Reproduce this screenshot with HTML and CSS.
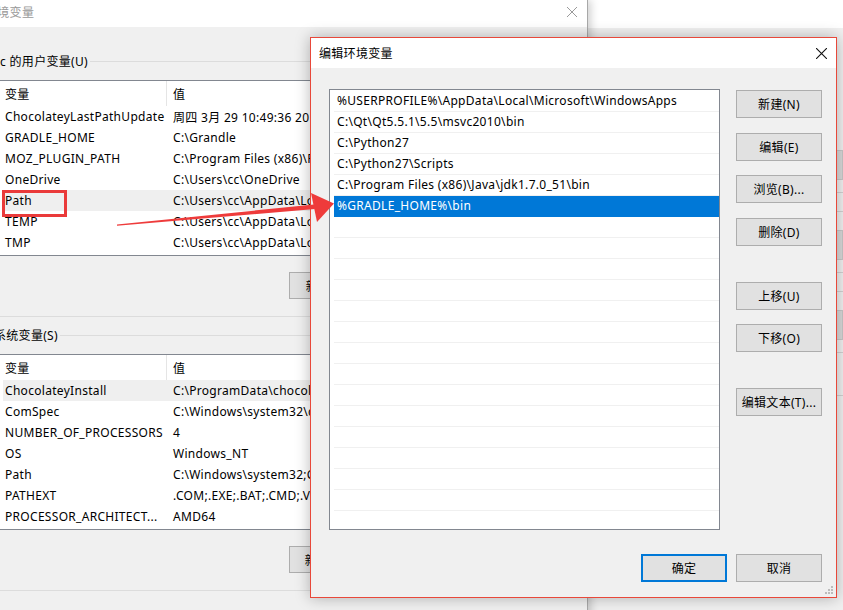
FILE: index.html
```html
<!DOCTYPE html>
<html lang="zh-CN">
<head>
    <meta charset="UTF-8">
    <title>编辑环境变量</title>
    <link rel="stylesheet" href="styles.css">
</head>
<body>
    <!-- window behind everything: system properties -->
    <div class="win sysprops">
        <div class="sp-title"></div>
        <div class="sp-body">
            <div class="sp-band"></div>
            <div class="sp-line"></div>
            <div class="sp-line"></div>
            <div class="sp-band"></div>
            <div class="sp-line"></div>
            <div class="sp-line"></div>
            <div class="sp-band"></div>
            <div class="sp-line"></div>
            <div class="sp-text">变</div>
            <div class="sp-line"></div>
        </div>
    </div>

    <!-- 环境变量 -->
    <div class="win envvars">
        <div class="titlebar">
            <span class="title">环境变量</span>
            <svg class="close" width="10" height="10" viewBox="0 0 10 10"><path d="M0 0L10 10M10 0L0 10" stroke="#9a9a9a" stroke-width="1"/></svg>
        </div>
        <div class="env-body">
            <div class="group-label"><span>cc 的用户变量(U)</span></div>
            <div class="listview">
                <div class="lv-head"><span class="c1">变量</span><span class="c2">值</span></div>
                <div class="lv-row"><span class="c1">ChocolateyLastPathUpdate</span><span class="c2">周四 3月 29 10:49:36 2018</span></div>
                <div class="lv-row"><span class="c1">GRADLE_HOME</span><span class="c2">C:\Grandle</span></div>
                <div class="lv-row"><span class="c1">MOZ_PLUGIN_PATH</span><span class="c2">C:\Program Files (x86)\Foxit Software\plugins</span></div>
                <div class="lv-row"><span class="c1">OneDrive</span><span class="c2">C:\Users\cc\OneDrive</span></div>
                <div class="lv-row hot"><span class="c1">Path</span><span class="c2">C:\Users\cc\AppData\Local\Microsoft\WindowsApps;</span></div>
                <div class="lv-row"><span class="c1">TEMP</span><span class="c2">C:\Users\cc\AppData\Local\Temp</span></div>
                <div class="lv-row"><span class="c1">TMP</span><span class="c2">C:\Users\cc\AppData\Local\Temp</span></div>
            </div>
            <div class="btn-row">
                <button class="btn">新建(N)...</button>
                <button class="btn">编辑(E)...</button>
                <button class="btn">删除(D)</button>
            </div>
            <div class="sep"></div>

            <div class="group-label sys"><span>系统变量(S)</span></div>
            <div class="listview">
                <div class="lv-head"><span class="c1">变量</span><span class="c2">值</span></div>
                <div class="lv-row hot"><span class="c1">ChocolateyInstall</span><span class="c2">C:\ProgramData\chocolatey</span></div>
                <div class="lv-row"><span class="c1">ComSpec</span><span class="c2">C:\Windows\system32\cmd.exe</span></div>
                <div class="lv-row"><span class="c1">NUMBER_OF_PROCESSORS</span><span class="c2">4</span></div>
                <div class="lv-row"><span class="c1">OS</span><span class="c2">Windows_NT</span></div>
                <div class="lv-row"><span class="c1">Path</span><span class="c2">C:\Windows\system32;C:\Windows;C:\Windows\System32\Wbem</span></div>
                <div class="lv-row"><span class="c1">PATHEXT</span><span class="c2">.COM;.EXE;.BAT;.CMD;.VBS;.VBE;.JS</span></div>
                <div class="lv-row"><span class="c1">PROCESSOR_ARCHITECT...</span><span class="c2">AMD64</span></div>
            </div>
            <div class="btn-row">
                <button class="btn">新建(W)...</button>
                <button class="btn">编辑(I)...</button>
                <button class="btn">删除(L)</button>
            </div>
            <div class="sep"></div>
        </div>
    </div>

    <!-- red mark around Path -->
    <div class="mark-box"></div>

    <!-- 编辑环境变量 -->
    <div class="win editdlg">
        <div class="titlebar">
            <span class="title">编辑环境变量</span>
            <svg class="close" width="11" height="11" viewBox="0 0 11 11"><path d="M0 0L11 11M11 0L0 11" stroke="#111" stroke-width="1.1"/></svg>
        </div>
        <div class="dlg-body">
            <div class="dlg-main">
                <div class="pathlist">
                    <div class="pl-row">%USERPROFILE%\AppData\Local\Microsoft\WindowsApps</div>
                    <div class="pl-row">C:\Qt\Qt5.5.1\5.5\msvc2010\bin</div>
                    <div class="pl-row">C:\Python27</div>
                    <div class="pl-row">C:\Python27\Scripts</div>
                    <div class="pl-row">C:\Program Files (x86)\Java\jdk1.7.0_51\bin</div>
                    <div class="pl-row selected">%GRADLE_HOME%\bin</div>
                    <div class="pl-row"></div>
                    <div class="pl-row"></div>
                    <div class="pl-row"></div>
                    <div class="pl-row"></div>
                    <div class="pl-row"></div>
                    <div class="pl-row"></div>
                    <div class="pl-row"></div>
                    <div class="pl-row"></div>
                    <div class="pl-row"></div>
                    <div class="pl-row"></div>
                    <div class="pl-row"></div>
                    <div class="pl-row"></div>
                    <div class="pl-row"></div>
                    <div class="pl-row"></div>
                    <div class="pl-row"></div>
                </div>
                <div class="side-btns">
                    <button class="btn">新建(N)</button>
                    <button class="btn">编辑(E)</button>
                    <button class="btn">浏览(B)...</button>
                    <button class="btn">删除(D)</button>
                    <button class="btn gap-before">上移(U)</button>
                    <button class="btn">下移(O)</button>
                    <button class="btn gap-before">编辑文本(T)...</button>
                </div>
            </div>
            <div class="dlg-foot">
                <button class="btn default">确定</button>
                <button class="btn">取消</button>
            </div>
            <svg class="grip" width="9" height="9" viewBox="0 0 9 9">
                <rect x="6" y="0" width="2" height="2" fill="#bcbcbc"/>
                <rect x="3" y="3" width="2" height="2" fill="#bcbcbc"/>
                <rect x="6" y="3" width="2" height="2" fill="#bcbcbc"/>
                <rect x="0" y="6" width="2" height="2" fill="#bcbcbc"/>
                <rect x="3" y="6" width="2" height="2" fill="#bcbcbc"/>
                <rect x="6" y="6" width="2" height="2" fill="#bcbcbc"/>
            </svg>
        </div>
    </div>

    <!-- red arrow drawn on top -->
    <svg class="arrow" width="843" height="610" viewBox="0 0 843 610">
        <polygon points="117,224.5 314,204.5 315,209 117,225.8" fill="#ee3b3b"/>
        <polygon points="311,193 334,203.5 317,222" fill="#ee3b3b"/>
    </svg>
</body>
</html>
```

FILE: styles.css
```css
body {
    margin: 0;
    width: 843px;
    height: 610px;
    overflow: hidden;
    position: relative;
    background: #f0f0f0;
    font-family: "Noto Sans", "Noto Sans CJK SC", sans-serif;
    font-size: 12px;
    letter-spacing: 0.3px;
    color: #000;
}

.win {
    position: absolute;
    box-sizing: border-box;
}

button {
    font-family: inherit;
    font-size: 12px;
    letter-spacing: inherit;
    color: #000;
}

.btn {
    width: 86px;
    height: 28px;
    padding: 0;
    background: #e1e1e1;
    border: 1px solid #adadad;
    box-sizing: border-box;
}

/* system properties window (behind) */
.sysprops {
    left: 588px;
    top: 0;
    width: 255px;
    height: 610px;
    background: #f0f0f0;
}

.sp-title {
    height: 28px;
    background: #fff;
}

.sp-body {
    display: flex;
    flex-direction: column;
    padding-left: 200px;
    padding-top: 122px;
}

.sp-band {
    height: 28px;
    background: #dadada;
    border: 1px solid #c8c8c8;
    margin-bottom: 12px;
}

.sp-line {
    height: 1px;
    background: #d2d2d2;
    margin-bottom: 18px;
}

.sp-text {
    padding-left: 36px;
    line-height: 16px;
    margin-bottom: 8px;
}

/* 环境变量 window */
.envvars {
    left: -20px;
    top: 0;
    width: 608px;
    height: 620px;
    background: #f0f0f0;
    border-right: 1px solid #a8a8a8;
    box-shadow: 3px 0 8px rgba(0, 0, 0, 0.18);
}

.titlebar {
    display: flex;
    align-items: center;
    justify-content: space-between;
    background: #fff;
}

.envvars .titlebar {
    height: 27px;
    padding: 0 10px 4px 5px;
    box-sizing: border-box;
}

.envvars .title {
    color: #999;
}

.env-body {
    display: flex;
    flex-direction: column;
    padding: 0 20px 0 14px;
}

.group-label {
    display: flex;
    align-items: center;
    height: 16px;
    margin-top: 26px;
}

.group-label::after {
    content: "";
    flex: 1;
    height: 1px;
    background: #dcdcdc;
    margin-left: 2px;
}

.group-label.sys {
    margin-top: 10px;
}

.listview {
    margin-top: 11px;
    margin-left: -4px;
    height: 176px;
    box-sizing: border-box;
    background: #fff;
    border: 1px solid #828790;
    overflow: hidden;
}

.lv-head,
.lv-row {
    display: flex;
    align-items: center;
    white-space: nowrap;
    padding-left: 14px;
}

.lv-head {
    height: 25px;
    align-items: stretch;
}

.lv-head span {
    line-height: 27px;
}

.lv-head .c1 {
    border-right: 1px solid #e5e5e5;
    width: 161px;
    margin-right: 6px;
}

.lv-row {
    height: 21px;
}

.lv-row.hot {
    background: linear-gradient(#efefef, #efefef) 12px 0 / 100% 100% no-repeat;
    background-color: #fff;
}

.lv-row .c1 {
    width: 168px;
    flex: none;
}

.btn-row {
    display: flex;
    justify-content: flex-end;
    gap: 10px;
    margin-top: 16px;
}

.envvars .btn {
    height: 27px;
}

.sep {
    height: 1px;
    background: #dcdcdc;
    margin-top: 17px;
    margin-left: -20px;
}

/* red mark box */
.mark-box {
    position: absolute;
    left: 2px;
    top: 190px;
    width: 65px;
    height: 27px;
    border: 3px solid #ea3a3a;
    box-sizing: border-box;
}

/* 编辑环境变量 dialog */
.editdlg {
    left: 310px;
    top: 37px;
    width: 527px;
    height: 561px;
    border: 1px solid #e8483a;
    background: #f0f0f0;
    box-shadow: 0 0 14px rgba(0, 0, 0, 0.28);
    display: flex;
    flex-direction: column;
}

.editdlg .titlebar {
    height: 30px;
    padding: 0 9px 0 8px;
    flex: none;
}

.dlg-body {
    flex: 1;
    position: relative;
    padding: 21px 14px 0 18px;
}

.dlg-main {
    display: flex;
}

.pathlist {
    width: 391px;
    height: 441px;
    box-sizing: border-box;
    background: #fff;
    border: 1px solid #828790;
    padding: 1px 0 0 4px;
    overflow: hidden;
}

.pl-row {
    height: 21px;
    line-height: 20px;
    border-bottom: 1px solid #f0f0f0;
    box-sizing: border-box;
    padding-left: 3px;
    white-space: nowrap;
}

.pl-row.selected {
    background: #0078d7;
    border-bottom-color: #0078d7;
    color: #fff;
}

.side-btns {
    display: flex;
    flex-direction: column;
    margin-left: 16px;
    padding-top: 1px;
}

.side-btns .btn + .btn {
    margin-top: 14.5px;
}

.side-btns .btn.gap-before {
    margin-top: 36px;
}

.dlg-foot {
    display: flex;
    justify-content: flex-end;
    gap: 9px;
    margin-top: 24px;
}

.btn.default {
    border: 2px solid #0078d7;
}

.grip {
    position: absolute;
    right: 2px;
    bottom: 2px;
}

.arrow {
    position: absolute;
    left: 0;
    top: 0;
    pointer-events: none;
}
```
